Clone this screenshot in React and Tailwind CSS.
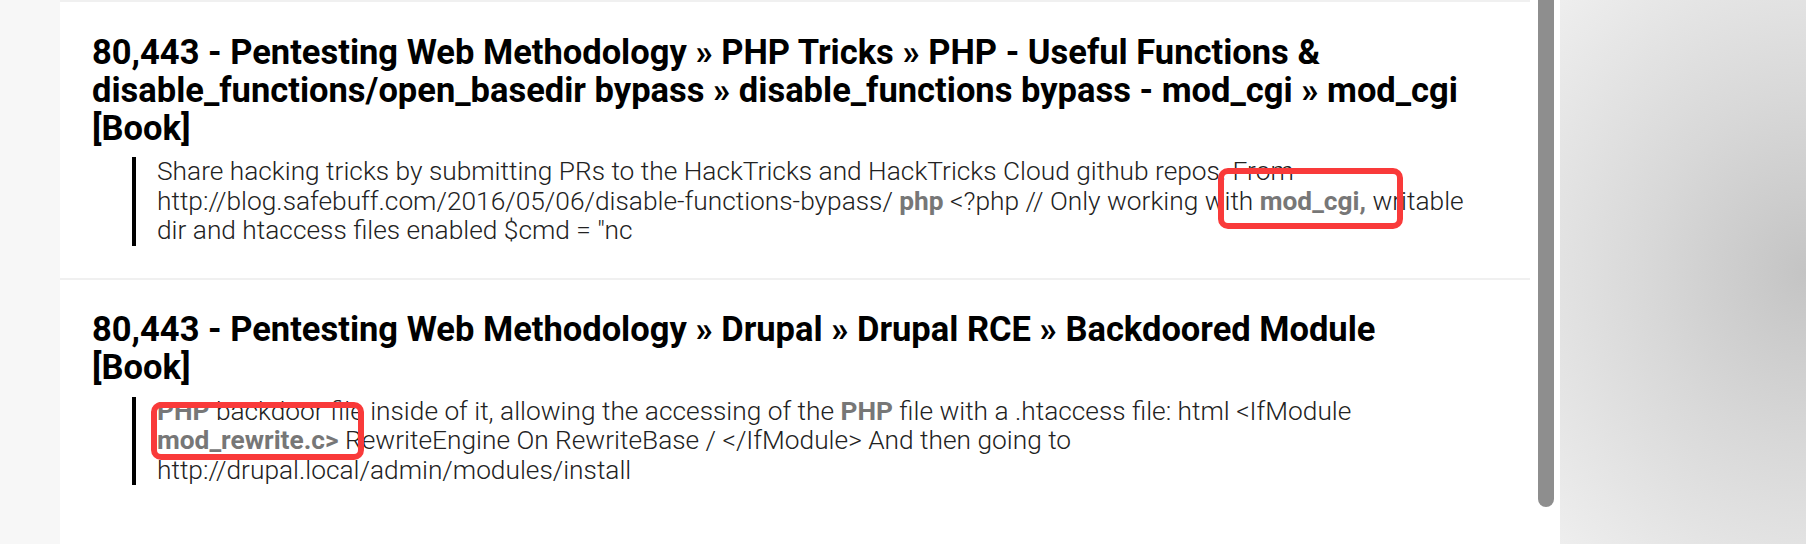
import React from "react";

const results = [
  {
    title:
      "80,443 - Pentesting Web Methodology » PHP Tricks » PHP - Useful Functions & disable_functions/open_basedir bypass » disable_functions bypass - mod_cgi » mod_cgi [Book]",
    snippet: [
      { t: "Share hacking tricks by submitting PRs to the HackTricks and HackTricks Cloud github repos. From http://blog.safebuff.com/2016/05/06/disable-functions-bypass/ " },
      { t: "php", b: true },
      { t: " <?php // Only working with " },
      { t: "mod_cgi,", b: true },
      { t: " writable dir and htaccess files enabled $cmd = \"nc" },
    ],
  },
  {
    title:
      "80,443 - Pentesting Web Methodology » Drupal » Drupal RCE » Backdoored Module [Book]",
    snippet: [
      { t: "PHP", b: true },
      { t: " backdoor file inside of it, allowing the accessing of the " },
      { t: "PHP", b: true },
      { t: " file with a .htaccess file: html <IfModule " },
      { t: "mod_rewrite.c>", b: true },
      { t: " RewriteEngine On RewriteBase / </IfModule> And then going to http://drupal.local/admin/modules/install" },
    ],
  },
];

const ResultItem = ({ item, first }) => (
  <li
    className={`pl-8 pr-8 ${
      first
        ? "border-b-2 border-[#f0f0f0] pt-[31px] pb-[32px]"
        : "pt-[30px] pb-[33px]"
    }`}
  >
    <h2 className="pr-[26px] font-['Roboto'] font-bold text-[34.5px] leading-[38px] text-black">
      {item.title}
    </h2>
    <blockquote
      className={`ml-10 border-l-4 border-black pl-[21px] font-['Roboto'] font-light text-[26.3px] leading-[29.5px] text-[#222] ${
        first ? "mt-[10px]" : "mt-[11px]"
      }`}
    >
      {item.snippet.map((s, i) =>
        s.b ? (
          <em key={i} className="not-italic font-bold text-[#777]">
            {s.t}
          </em>
        ) : (
          <span key={i}>{s.t}</span>
        )
      )}
    </blockquote>
  </li>
);

export default function App() {
  return (
    <div className="flex h-[544px] w-full overflow-hidden bg-white">
      {/* left page margin */}
      <div className="w-[60px] shrink-0 bg-[#f7f7f7]" />

      {/* search results panel */}
      <div className="relative flex w-[1500px] shrink-0 bg-white">
        <ul className="w-[1470px] border-t-2 border-[#f0f0f0]">
          {results.map((item, index) => (
            <ResultItem item={item} key={index} first={index === 0} />
          ))}
        </ul>

        {/* scrollbar */}
        <div className="ml-[8px] w-[16px]">
          <div className="h-[507px] w-[16px] rounded-b-full bg-[#8e8e8e]" />
        </div>

        {/* annotation boxes */}
        <div className="absolute left-[1158px] top-[168px] h-[61px] w-[185px] rounded-[10px] border-[6px] border-[#f93a3a]" />
        <div className="absolute left-[91px] top-[402px] h-[58px] w-[213px] rounded-[10px] border-[6px] border-[#f93a3a]" />
      </div>

      {/* window backdrop */}
      <div className="flex-1 bg-[radial-gradient(ellipse_at_right,#c4c4c4_0%,#d8d8d8_45%,#eeeeee_100%)]" />
    </div>
  );
}
